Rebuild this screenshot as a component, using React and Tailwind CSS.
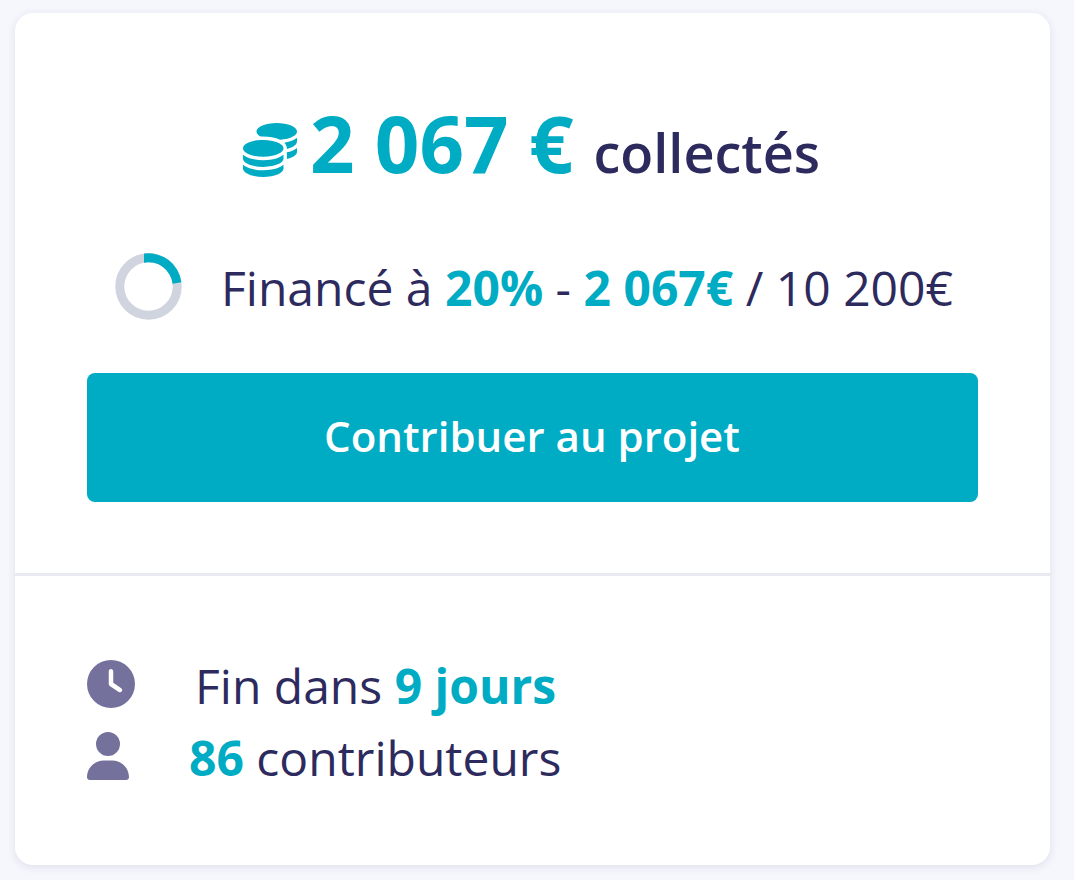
import React from 'react';
import { FaClock, FaCoins, FaUser } from 'react-icons/fa6';

export default function App() {
  return (
    <div className="flex h-[880px] w-[1074px] bg-[#f6f7fd] pl-[15px] pt-[13px] font-['Open_Sans',sans-serif] text-[#2d2a5e]">
      <main className="h-[852px] w-[1035px] rounded-[18px] bg-white shadow-[0_2px_8px_rgba(45,42,94,0.12)]">
        <section className="h-[563px] border-b-[3px] border-[#e9e9f1] px-[72px] pt-[80px]">
          <h1 className="flex h-[100px] items-baseline whitespace-pre pl-[156px] text-[#00abc4]">
            <FaCoins className="h-[54px] w-[54px] shrink-0 translate-y-[4px]" />
            <span className="ml-[13px] text-[78px] font-bold leading-[100px]">2 067 €</span>
            <span className="ml-[20px] text-[54px] font-semibold leading-[100px] text-[#2d2a5e]">collectés</span>
          </h1>
          <div className="mt-[45px] flex h-[100px] items-center whitespace-pre pl-[28px]">
            <svg className="mb-[3px] h-[67px] w-[67px]" viewBox="0 0 67 67" fill="none">
              <circle cx="33.5" cy="33.5" r="28.7" stroke="#cfd4de" strokeWidth="9" />
              <path d="M29 .6A33.2 33.2 0 0 1 66.4 29.2L57.6 30.8A24.2 24.2 0 0 0 29 9.7Z" fill="#00abc4" />
            </svg>
            <p className="ml-[39px] text-[48px]">Financé à <b className="text-[#00abc4]">20%</b> - <b className="text-[#00abc4]">2 067€</b> / 10 200€</p>
          </div>
          <button className="mt-[35px] flex h-[129px] w-[891px] items-center justify-center rounded-[8px] bg-[#00abc4] pb-[5px] pr-px text-[42px] font-semibold text-white">Contribuer au projet</button>
        </section>
        <section className="px-[72px] pt-[74px]">
          <div className="flex h-[72px] items-center">
            <FaClock className="mb-[4px] h-[48px] w-[48px] text-[#74719c]" />
            <p className="ml-[60px] whitespace-pre text-[48px]">Fin dans <b className="text-[#00abc4]">9 jours</b></p>
          </div>
          <div className="flex h-[72px] items-center">
            <FaUser className="mb-[4px] h-[48px] w-[42px] text-[#74719c]" />
            <p className="ml-[60px] whitespace-pre text-[48px]"><b className="text-[#00abc4]">86</b> contributeurs</p>
          </div>
        </section>
      </main>
    </div>
  );
}
